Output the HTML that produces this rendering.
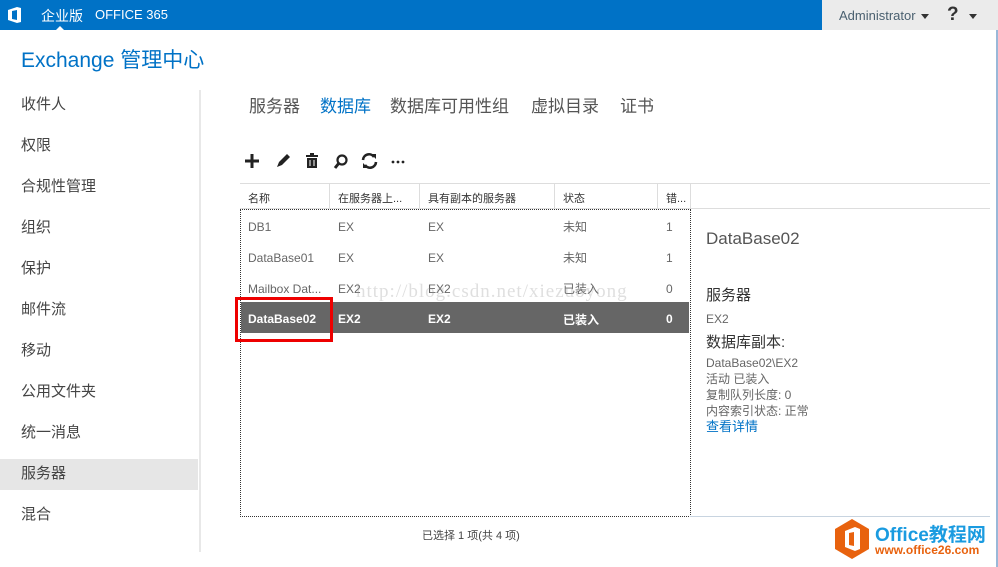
<!DOCTYPE html><html><head><meta charset="utf-8"><style>
*{margin:0;padding:0;box-sizing:border-box}
body{width:998px;height:567px;position:relative;overflow:hidden;background:#fff;font-family:"Liberation Sans","Noto Sans CJK SC",sans-serif;color:#333}
.a{position:absolute;white-space:nowrap}
.nav{font-size:15px;color:#444;left:21px}
.tab{font-size:17px;color:#555;top:92px}
.th{font-size:11px;color:#333;top:190px}
.td{font-size:12px;color:#666}
.sel{font-size:12px;color:#fff;font-weight:bold}
</style></head><body>
<div class="a" style="left:0;top:0;width:822px;height:30px;background:#0072c6"></div>
<div class="a" style="left:822px;top:0;width:176px;height:30px;background:#ebebeb"></div>
<svg class="a" style="left:7px;top:6px" width="16" height="18" viewBox="0 0 16 18"><path d="M1 4 L10 1 L14 2 L14 16 L10 17 L1 14 Z M5 5 L5 13 L10 14 L10 4 Z" fill="#fff" fill-rule="evenodd"/></svg>
<div class="a" style="left:41px;top:6px;font-size:14px;color:#fff">企业版</div>
<div class="a" style="left:56px;top:26px;width:0;height:0;border-left:4px solid transparent;border-right:4px solid transparent;border-bottom:4px solid #fff"></div>
<div class="a" style="left:95px;top:7px;font-size:13px;color:#fff">OFFICE 365</div>
<div class="a" style="left:839px;top:8px;font-size:13px;color:#4a6070">Administrator</div>
<div class="a" style="left:921px;top:14px;border-left:4px solid transparent;border-right:4px solid transparent;border-top:5px solid #333"></div>
<div class="a" style="left:947px;top:4px;font-size:19px;font-weight:bold;color:#333">?</div>
<div class="a" style="left:969px;top:14px;border-left:4px solid transparent;border-right:4px solid transparent;border-top:5px solid #333"></div>
<div class="a" style="left:996px;top:30px;width:2px;height:537px;background:#9ab8d8"></div>
<div class="a" style="left:21px;top:44px;font-size:21px;color:#0072c6">Exchange 管理中心</div>
<div class="a" style="left:0;top:459px;width:198px;height:31px;background:#e6e6e6"></div>
<div class="a nav" style="top:93px">收件人</div>
<div class="a nav" style="top:134px">权限</div>
<div class="a nav" style="top:175px">合规性管理</div>
<div class="a nav" style="top:216px">组织</div>
<div class="a nav" style="top:257px">保护</div>
<div class="a nav" style="top:298px">邮件流</div>
<div class="a nav" style="top:339px">移动</div>
<div class="a nav" style="top:380px">公用文件夹</div>
<div class="a nav" style="top:421px">统一消息</div>
<div class="a nav" style="top:462px">服务器</div>
<div class="a nav" style="top:503px">混合</div>
<div class="a" style="left:199px;top:90px;width:2px;height:462px;background:#e8e8e8"></div>
<div class="a tab" style="left:249px">服务器</div>
<div class="a tab" style="left:320px;color:#0072c6">数据库</div>
<div class="a tab" style="left:390px">数据库可用性组</div>
<div class="a tab" style="left:531px">虚拟目录</div>
<div class="a tab" style="left:620px">证书</div>
<svg class="a" style="left:244px;top:152px" width="170" height="18" viewBox="0 0 170 18">
<path d="M8 2v14M1 9h14" stroke="#222" stroke-width="3"/>
<path d="M33 15l2-5 8-8 3 3-8 8z" fill="#222"/>
<rect x="62" y="3" width="12" height="2" fill="#222"/><rect x="66" y="1" width="4" height="2" fill="#222"/><path d="M63 6h10v10H63z" fill="#222"/><path d="M66 8v6M70 8v6" stroke="#fff" stroke-width="1"/>
<circle cx="98" cy="8" r="4.5" stroke="#222" stroke-width="2.2" fill="none"/><path d="M95 11l-4 5" stroke="#222" stroke-width="3"/>
<path d="M119 8a6 6 0 0 1 11-3M132 10a6 6 0 0 1-11 3" stroke="#222" stroke-width="2.6" fill="none"/><path d="M127 2l5 0 0 5zM124 16l-5 0 0-5z" fill="#222"/>
<circle cx="149" cy="10" r="1.4" fill="#222"/><circle cx="154" cy="10" r="1.4" fill="#222"/><circle cx="159" cy="10" r="1.4" fill="#222"/>
</svg>
<div class="a" style="left:240px;top:183px;width:750px;height:1px;background:#ddd"></div>
<div class="a" style="left:240px;top:208px;width:750px;height:1px;background:#ddd"></div>
<div class="a" style="left:329px;top:184px;width:1px;height:24px;background:#ddd"></div>
<div class="a" style="left:419px;top:184px;width:1px;height:24px;background:#ddd"></div>
<div class="a" style="left:554px;top:184px;width:1px;height:24px;background:#ddd"></div>
<div class="a" style="left:657px;top:184px;width:1px;height:24px;background:#ddd"></div>
<div class="a" style="left:690px;top:184px;width:1px;height:24px;background:#ddd"></div>
<div class="a th" style="left:248px">名称</div><div class="a th" style="left:338px">在服务器上...</div><div class="a th" style="left:428px">具有副本的服务器</div><div class="a th" style="left:563px">状态</div><div class="a th" style="left:666px">错...</div>
<div class="a" style="left:240px;top:209px;width:451px;height:308px;border:1px dotted #333"></div>
<div class="a td" style="left:248px;top:220px">DB1</div><div class="a td" style="left:338px;top:220px">EX</div><div class="a td" style="left:428px;top:220px">EX</div><div class="a td" style="left:563px;top:218px">未知</div><div class="a td" style="left:666px;top:220px">1</div>
<div class="a td" style="left:248px;top:251px">DataBase01</div><div class="a td" style="left:338px;top:251px">EX</div><div class="a td" style="left:428px;top:251px">EX</div><div class="a td" style="left:563px;top:249px">未知</div><div class="a td" style="left:666px;top:251px">1</div>
<div class="a td" style="left:248px;top:282px">Mailbox Dat...</div><div class="a td" style="left:338px;top:282px">EX2</div><div class="a td" style="left:428px;top:282px">EX2</div><div class="a td" style="left:563px;top:280px">已装入</div><div class="a td" style="left:666px;top:282px">0</div>
<div class="a" style="left:356px;top:281px;font-family:'Liberation Serif',serif;font-size:19px;letter-spacing:1px;color:rgba(150,150,150,.3)">http://blog.csdn.net/xiezuoyong</div>
<div class="a" style="left:241px;top:302px;width:448px;height:31px;background:#666"></div>
<div class="a sel" style="left:248px;top:312px">DataBase02</div><div class="a sel" style="left:338px;top:312px">EX2</div><div class="a sel" style="left:428px;top:312px">EX2</div><div class="a sel" style="left:563px;top:311px">已装入</div><div class="a sel" style="left:666px;top:312px">0</div>
<div class="a" style="left:235px;top:297px;width:98px;height:45px;border:3px solid #e00"></div>
<div class="a" style="left:706px;top:229px;font-size:17px;color:#555">DataBase02</div>
<div class="a" style="left:706px;top:284px;font-size:15px;color:#333">服务器</div>
<div class="a" style="left:706px;top:312px;font-size:12px;color:#666">EX2</div>
<div class="a" style="left:706px;top:331px;font-size:15px;color:#333">数据库副本:</div>
<div class="a" style="left:706px;top:355px;font-size:12px;color:#666;line-height:16px">DataBase02\EX2<br>活动 已装入<br>复制队列长度: 0<br>内容索引状态: 正常<br><span style="color:#0072c6;font-size:13px">查看详情</span></div>
<div class="a" style="left:690px;top:516px;width:300px;height:1px;background:#c8d4e0"></div>
<div class="a" style="left:422px;top:527px;font-size:11px;color:#444">已选择 1 项(共 4 项)</div>
<svg class="a" style="left:834px;top:518px" width="36" height="42" viewBox="0 0 36 42"><path d="M18 1L35 11V31L18 41L1 31V11Z" fill="#e8620e"/><path d="M11 13l10-4 5 2v20l-5 2-10-4zM15 15v12l5 1V14z" fill="#fff" fill-rule="evenodd"/></svg>
<div class="a" style="left:875px;top:520px;font-size:19px;font-weight:bold;color:#1a9be0">Office教程网</div>
<div class="a" style="left:875px;top:543px;font-size:12px;font-weight:bold;color:#e8620e">www.office26.com</div>
</body></html>
